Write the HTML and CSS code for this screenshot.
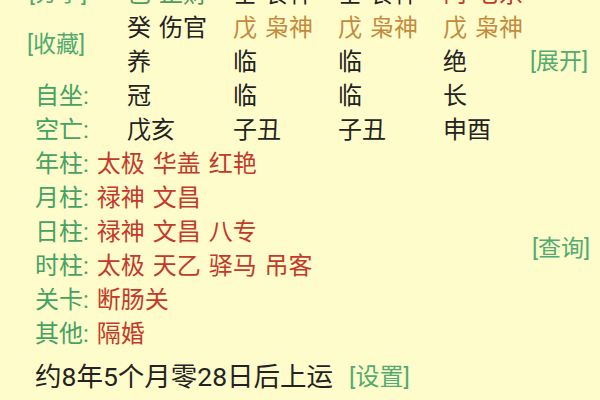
FILE: index.html
```html
<!DOCTYPE html>
<html lang="zh">
<head>
<meta charset="utf-8">
<link rel="stylesheet" href="styles.css">
</head>
<body>
<div class="page">
  <div class="grid">
    <div class="link top-link">[分享]</div>
    <div class="cell green">己 正财</div>
    <div class="cell">壬 食神</div>
    <div class="cell">壬 食神</div>
    <div class="cell red">丙 七杀</div>
    <div class="empty"></div>

    <div class="link fav">[收藏]</div>
    <div class="cell">癸 伤官</div>
    <div class="cell orange">戊 枭神</div>
    <div class="cell orange">戊 枭神</div>
    <div class="cell orange">戊 枭神</div>
    <div class="empty"></div>

    <div class="cell first">养</div>
    <div class="cell">临</div>
    <div class="cell">临</div>
    <div class="cell">绝</div>
    <div class="link">[展开]</div>

    <div class="label">自坐:</div>
    <div class="cell">冠</div>
    <div class="cell">临</div>
    <div class="cell">临</div>
    <div class="cell">长</div>
    <div class="empty"></div>

    <div class="label">空亡:</div>
    <div class="cell">戊亥</div>
    <div class="cell">子丑</div>
    <div class="cell">子丑</div>
    <div class="cell">申酉</div>
    <div class="empty"></div>

    <div class="line"><span class="lab">年柱:</span> <span class="red">太极 华盖 红艳</span></div>
    <div class="empty"></div>
    <div class="line"><span class="lab">月柱:</span> <span class="red">禄神 文昌</span></div>
    <div class="empty"></div>
    <div class="line"><span class="lab">日柱:</span> <span class="red">禄神 文昌 八专</span></div>
    <div class="link query">[查询]</div>
    <div class="line"><span class="lab">时柱:</span> <span class="red">太极 天乙 驿马 吊客</span></div>
    <div class="line"><span class="lab">关卡:</span> <span class="red">断肠关</span></div>
    <div class="empty"></div>
    <div class="line"><span class="lab">其他:</span> <span class="red">隔婚</span></div>
    <div class="empty"></div>
  </div>
  <div class="footer">
    <span class="luck">约8年5个月零28日后上运</span>
    <span class="link set">[设置]</span>
  </div>
</div>
</body>
</html>
```

FILE: styles.css
```css
html, body {
  margin: 0;
  padding: 0;
  background: #fefcca;
}
body {
  width: 600px;
  height: 400px;
  overflow: hidden;
  font-family: Roboto, "Noto Sans CJK SC", sans-serif;
  color: #232323;
}
.page {
  margin-top: -23px;
}
.grid {
  display: grid;
  grid-template-columns: 100px 106px 105px 105px 87px 70px;
  grid-auto-rows: 34px;
  padding-left: 27px;
  align-items: center;
  font-size: 24px;
  line-height: 34px;
  word-spacing: 2px;
}
.cell {
  white-space: nowrap;
}
.first {
  grid-column: 2;
}
.fav {
  grid-row: 2 / span 2;
  grid-column: 1;
  align-self: center;
}
.label {
  padding-left: 8px;
  color: #45a265;
}
.line {
  grid-column: 1 / 6;
  padding-left: 8px;
  white-space: nowrap;
}
.lab {
  color: #45a265;
}
.green {
  color: #4a9e5e;
}
.red {
  color: #c33a2c;
}
.orange {
  color: #c38a3e;
}
.link {
  font-size: 23px;
  color: #52ab70;
  white-space: nowrap;
  word-spacing: 0;
}
.top-link {
  padding-left: 2px;
}
.query {
  grid-row: span 2;
  grid-column: 6;
  align-self: center;
  padding-left: 2px;
}
.footer {
  margin-top: 9px;
  padding-left: 35px;
  line-height: 34px;
  display: flex;
  align-items: center;
}
.luck {
  font-size: 26.5px;
}
.set {
  margin-left: 16px;
  font-size: 24px;
}
```
